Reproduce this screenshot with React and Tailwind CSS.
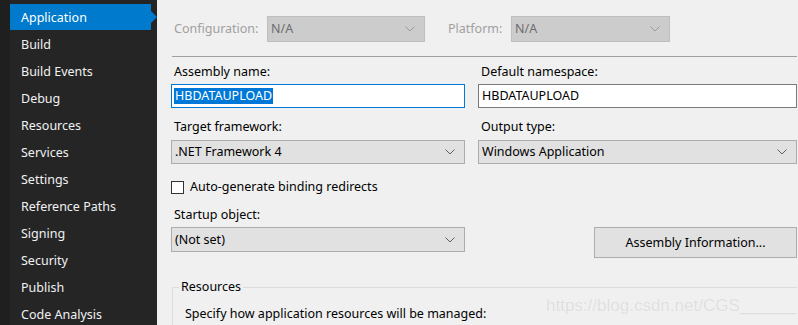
const NAV = [
  'Application', 'Build', 'Build Events', 'Debug', 'Resources', 'Services',
  'Settings', 'Reference Paths', 'Signing', 'Security', 'Publish', 'Code Analysis'
]

const FONT = { fontFamily: '"Noto Sans", "Noto Sans CJK SC", sans-serif' }

function Chevron({ color = '#606060' }) {
  return (
    <svg width="10" height="6" viewBox="0 0 10 6" className="shrink-0">
      <polyline points="0.5,0.5 5,5 9.5,0.5" fill="none" stroke={color} strokeWidth="1" />
    </svg>
  )
}

function Select({ value, disabled, className = '' }) {
  return (
    <div
      className={`flex items-center justify-between pl-[3px] pr-[9px] border ${
        disabled ? 'bg-[#cccccc] border-[#bfbfbf] text-[#6d6d6d]' : 'bg-[#e1e1e1] border-[#adadad] text-black'
      } ${className}`}
    >
      <span>{value}</span>
      <Chevron color={disabled ? '#9a9a9a' : '#606060'} />
    </div>
  )
}

export default function App() {
  return (
    <div className="relative flex w-[798px] h-[325px] overflow-hidden text-[12.5px] leading-4" style={FONT}>
      {/* Sidebar */}
      <div className="flex w-[157px] shrink-0 bg-[#252526]">
        <div className="w-[10px] bg-[#1f1f1f]" />
        <div className="flex-1 pt-[4px]">
          {NAV.map((n, i) => (
            <div key={n} className="relative h-[27px]">
              {i === 0 ? (
                <div className="flex items-center h-[26px] w-[141px] bg-[#007acc] pl-[11px] pt-[2px] text-white">
                  {n}
                  <div className="absolute left-[141px] top-[7px] w-0 h-0 border-y-[6px] border-y-transparent border-l-[6px] border-l-[#007acc]" />
                </div>
              ) : (
                <div className="flex items-center h-[26px] pl-[11px] pt-[2px] text-[#f1f1f1]">{n}</div>
              )}
            </div>
          ))}
        </div>
      </div>

      {/* Content */}
      <div className="flex-1 bg-[#f0f0f0] pl-[14px] pr-[1px] pt-[16px]">
        <div className="flex items-center h-[26px] text-[#a0a0a0]">
          <span className="w-[96px] pl-[3px]">Configuration:</span>
          <Select value="N/A" disabled className="w-[158px] h-[26px]" />
          <span className="ml-[23px] w-[63px]">Platform:</span>
          <Select value="N/A" disabled className="w-[159px] h-[26px]" />
        </div>

        <div className="mt-[14px] ml-[1px] h-px bg-[#a0a0a0]" />

        <div className="grid grid-cols-[294px_319px] gap-x-[13px] mt-[7px]">
          <div>
            <div className="pl-[3px] h-[16px]">Assembly name:</div>
            <div className="mt-[4px] h-[24px] border border-[#0078d7] bg-white flex items-center pl-[2px]">
              <span className="bg-[#0078d7] text-white px-px">HBDATAUPLOAD</span>
            </div>
          </div>
          <div>
            <div className="pl-[3px] h-[16px]">Default namespace:</div>
            <div className="mt-[4px] h-[24px] border border-[#7a7a7a] bg-white flex items-center pl-[3px]">
              HBDATAUPLOAD
            </div>
          </div>

          <div className="mt-[11px]">
            <div className="pl-[3px] h-[16px]">Target framework:</div>
            <Select value=".NET Framework 4" className="mt-[5px] h-[24px]" />
          </div>
          <div className="mt-[11px]">
            <div className="pl-[3px] h-[16px]">Output type:</div>
            <Select value="Windows Application" className="mt-[5px] h-[24px]" />
          </div>

          <div className="mt-[15px] flex items-center">
            <div className="w-[13px] h-[13px] border border-[#333333] bg-white" />
            <span className="ml-[6px]">Auto-generate binding redirects</span>
          </div>
          <div />

          <div className="mt-[12px]">
            <div className="pl-[3px] h-[16px]">Startup object:</div>
            <Select value="(Not set)" className="mt-[4px] h-[25px]" />
          </div>
          <div className="mt-[12px] flex justify-end">
            <div className="mt-[20px] w-[203px] h-[31px] border border-[#adadad] bg-[#e1e1e1] flex items-center justify-center">
              Assembly Information...
            </div>
          </div>
        </div>

        {/* Resources group */}
        <div className="relative mt-[29px] ml-[1px] h-[60px] border-l border-t border-[#dcdcdc]">
          <span className="absolute -top-[9px] left-[6px] bg-[#f0f0f0] px-[2px]">Resources</span>
          <div className="pl-[12px] pt-[18px]">Specify how application resources will be managed:</div>
        </div>
      </div>

      {/* Watermark */}
      <div
        className="absolute left-[546px] top-[296px] text-[17px] leading-5 text-[#dedede] whitespace-nowrap"
        style={{ fontFamily: '"Liberation Sans", Arial, sans-serif', textShadow: '0 0 1px #ffffff' }}
      >
        https://blog.csdn.net/CGS______
      </div>
    </div>
  )
}
